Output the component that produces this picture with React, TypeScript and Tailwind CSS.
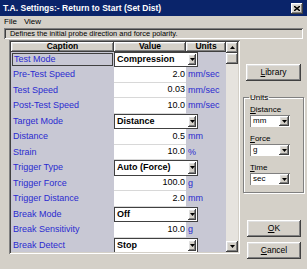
import React from "react";

// ── grid row data ──
type Row = {
  caption: string;
  value: string;
  unit?: string;
  combo?: boolean;
  selected?: boolean;
};

const ROWS: Row[] = [
  { caption: "Test Mode", value: "Compression", combo: true, selected: true },
  { caption: "Pre-Test Speed", value: "2.0", unit: "mm/sec" },
  { caption: "Test Speed", value: "0.03", unit: "mm/sec" },
  { caption: "Post-Test Speed", value: "10.0", unit: "mm/sec" },
  { caption: "Target Mode", value: "Distance", combo: true },
  { caption: "Distance", value: "0.5", unit: "mm" },
  { caption: "Strain", value: "10.0", unit: "%" },
  { caption: "Trigger Type", value: "Auto (Force)", combo: true },
  { caption: "Trigger Force", value: "100.0", unit: "g" },
  { caption: "Trigger Distance", value: "2.0", unit: "mm" },
  { caption: "Break Mode", value: "Off", combo: true },
  { caption: "Break Sensitivity", value: "10.0", unit: "g" },
  { caption: "Break Detect", value: "Stop", combo: true },
];

const RAISED =
  "shadow-[inset_-1px_-1px_0_#404040,inset_1px_1px_0_#ffffff,inset_-2px_-2px_0_#808080,inset_2px_2px_0_#dfdfdf]";
const SUNKEN =
  "shadow-[inset_1px_1px_0_#808080,inset_-1px_-1px_0_#ffffff,inset_2px_2px_0_#404040,inset_-2px_-2px_0_#d4d0c8]";
const SUNKEN_THIN = "shadow-[inset_1px_1px_0_#808080,inset_-1px_-1px_0_#ffffff]";

function DownArrow() {
  return (
    <svg width="5" height="3" viewBox="0 0 5 3">
      <path d="M0 0h5L2.5 3z" fill="#000" />
    </svg>
  );
}

function ArrowButton({ w = 9 }: { w?: number }) {
  return (
    <div
      className={`flex h-full items-center justify-center bg-[#d4d0c8] ${RAISED}`}
      style={{ width: w }}
    >
      <DownArrow />
    </div>
  );
}

// ── small combo used in the Units group ──
function SmallSelect({ value }: { value: string }) {
  return (
    <div className={`flex h-[12px] w-[40px] bg-white p-[1px] ${SUNKEN_THIN}`}>
      <div className="flex-1 pl-[2px] text-[8px] leading-[10px] text-black">{value}</div>
      <ArrowButton w={10} />
    </div>
  );
}

function PushButton({ label, mnemonic }: { label: string; mnemonic: number }) {
  return (
    <div
      className={`flex h-[17px] items-center justify-center bg-[#d4d0c8] text-[8.5px] text-black ${RAISED}`}
    >
      <span>
        {label.slice(0, mnemonic)}
        <span className="underline">{label[mnemonic]}</span>
        {label.slice(mnemonic + 1)}
      </span>
    </div>
  );
}

function Label({ text }: { text: string }) {
  return (
    <div className="text-[8px] leading-[9px] text-black">
      <span className="underline">{text[0]}</span>
      {text.slice(1)}
    </div>
  );
}

function GridRow({ row }: { row: Row }) {
  return (
    <div className="flex h-[15.5px] shrink-0">
      {/* caption */}
      <div className="w-[103px] shrink-0 bg-[#c8c8d4] p-[1px]">
        <div
          className={`flex h-full items-center pl-[1px] text-[9px] text-[#2b2bd0] ${
            row.selected ? "border border-[#404040]" : ""
          }`}
        >
          {row.caption}
        </div>
      </div>
      {row.combo ? (
        <div className="flex flex-1 bg-[#c8c8d4]">
          <div className="flex w-[84px] border border-[#404040] bg-white">
            <div className="flex flex-1 items-center pl-[2px] text-[9px] font-bold text-black">
              {row.value}
            </div>
            <div className="p-[1px]">
              <ArrowButton w={8} />
            </div>
          </div>
        </div>
      ) : (
        <>
          <div className="flex w-[72px] shrink-0 items-center justify-end border-b border-[#d8d8d8] bg-white pr-[1px] text-[9px] text-black">
            {row.value}
          </div>
          <div className="flex flex-1 items-center bg-[#c8c8d4] pl-[2px] text-[9px] text-[#2b2bd0]">
            {row.unit}
          </div>
        </>
      )}
    </div>
  );
}

function Scrollbar() {
  return (
    <div className="flex w-[12px] shrink-0 flex-col bg-[#e6e3de]">
      <div className={`flex h-[11px] items-center justify-center bg-[#d4d0c8] ${RAISED}`}>
        <svg width="5" height="3" viewBox="0 0 5 3">
          <path d="M0 3h5L2.5 0z" fill="#000" />
        </svg>
      </div>
      <div className={`h-[11px] bg-[#d4d0c8] ${RAISED}`} />
      <div className="flex-1" />
      <div className={`flex h-[11px] items-center justify-center bg-[#d4d0c8] ${RAISED}`}>
        <DownArrow />
      </div>
    </div>
  );
}

export default function App() {
  return (
    <div className="flex h-[269px] w-[307px] flex-col overflow-hidden bg-[#d4d0c8] font-['Liberation_Sans',Arial,sans-serif]">
      {/* title bar */}
      <div className="flex h-[16px] shrink-0 items-center bg-[#0a246a] pl-[3px] pr-[4px]">
        <div className="flex-1 text-[8.5px] font-bold text-white">
          T.A. Settings:- Return to Start (Set Dist)
        </div>
        <div className={`flex h-[11px] w-[12px] items-center justify-center bg-[#d4d0c8] ${RAISED}`}>
          <svg width="6" height="5" viewBox="0 0 6 5">
            <path d="M0 0L6 5M6 0L0 5" stroke="#000" strokeWidth="1.4" />
          </svg>
        </div>
      </div>

      {/* menu */}
      <div className="flex h-[11px] shrink-0 items-center gap-[7px] pl-[4px] text-[8px] text-black">
        <span>File</span>
        <span>View</span>
      </div>

      {/* description */}
      <div
        className={`mx-[4px] mt-[1px] flex h-[11px] shrink-0 items-center pl-[6px] text-[7.4px] text-black ${SUNKEN}`}
      >
        Defines the initial probe direction and force polarity.
      </div>

      <div className="mt-[1px] flex flex-1">
        {/* property grid */}
        <div className={`ml-[9px] flex h-[214px] w-[231px] p-[2px] ${SUNKEN}`}>
          <div className="flex flex-1 flex-col overflow-hidden">
            <div className="flex h-[9.5px] shrink-0 text-[8.5px] font-bold text-black">
              <div className={`flex w-[103px] items-center justify-center bg-[#d4d0c8] ${RAISED}`}>
                Caption
              </div>
              <div className={`flex w-[72px] items-center justify-center bg-[#d4d0c8] ${RAISED}`}>
                Value
              </div>
              <div className={`flex flex-1 items-center justify-center bg-[#d4d0c8] ${RAISED}`}>
                Units
              </div>
            </div>
            {ROWS.map((r) => (
              <GridRow key={r.caption} row={r} />
            ))}
          </div>
          <Scrollbar />
        </div>

        {/* right side panel */}
        <div className="ml-[3px] flex w-[61px] flex-col">
          <div className="ml-[3px] mt-[24px] w-[55px]">
            <PushButton label="Library" mnemonic={0} />
          </div>

          <fieldset className="mt-[12px] h-[100px] border border-[#808080] px-[6px] shadow-[1px_1px_0_#ffffff,inset_1px_1px_0_#ffffff]">
            <legend className="ml-[-1px] px-[1px] text-[8px] leading-[9px] text-black">Units</legend>
            <div className="mt-[3px] flex flex-col">
              <Label text="Distance" />
              <div className="mt-[1px]">
                <SmallSelect value="mm" />
              </div>
              <div className="mt-[7px]">
                <Label text="Force" />
              </div>
              <div className="mt-[1px]">
                <SmallSelect value="g" />
              </div>
              <div className="mt-[7px]">
                <Label text="Time" />
              </div>
              <div className="mt-[1px]">
                <SmallSelect value="sec" />
              </div>
            </div>
          </fieldset>

          <div className="ml-[4px] mt-[27px] w-[54px]">
            <PushButton label="OK" mnemonic={0} />
          </div>
          <div className="ml-[4px] mt-[5px] w-[54px]">
            <PushButton label="Cancel" mnemonic={0} />
          </div>
        </div>
      </div>
    </div>
  );
}
